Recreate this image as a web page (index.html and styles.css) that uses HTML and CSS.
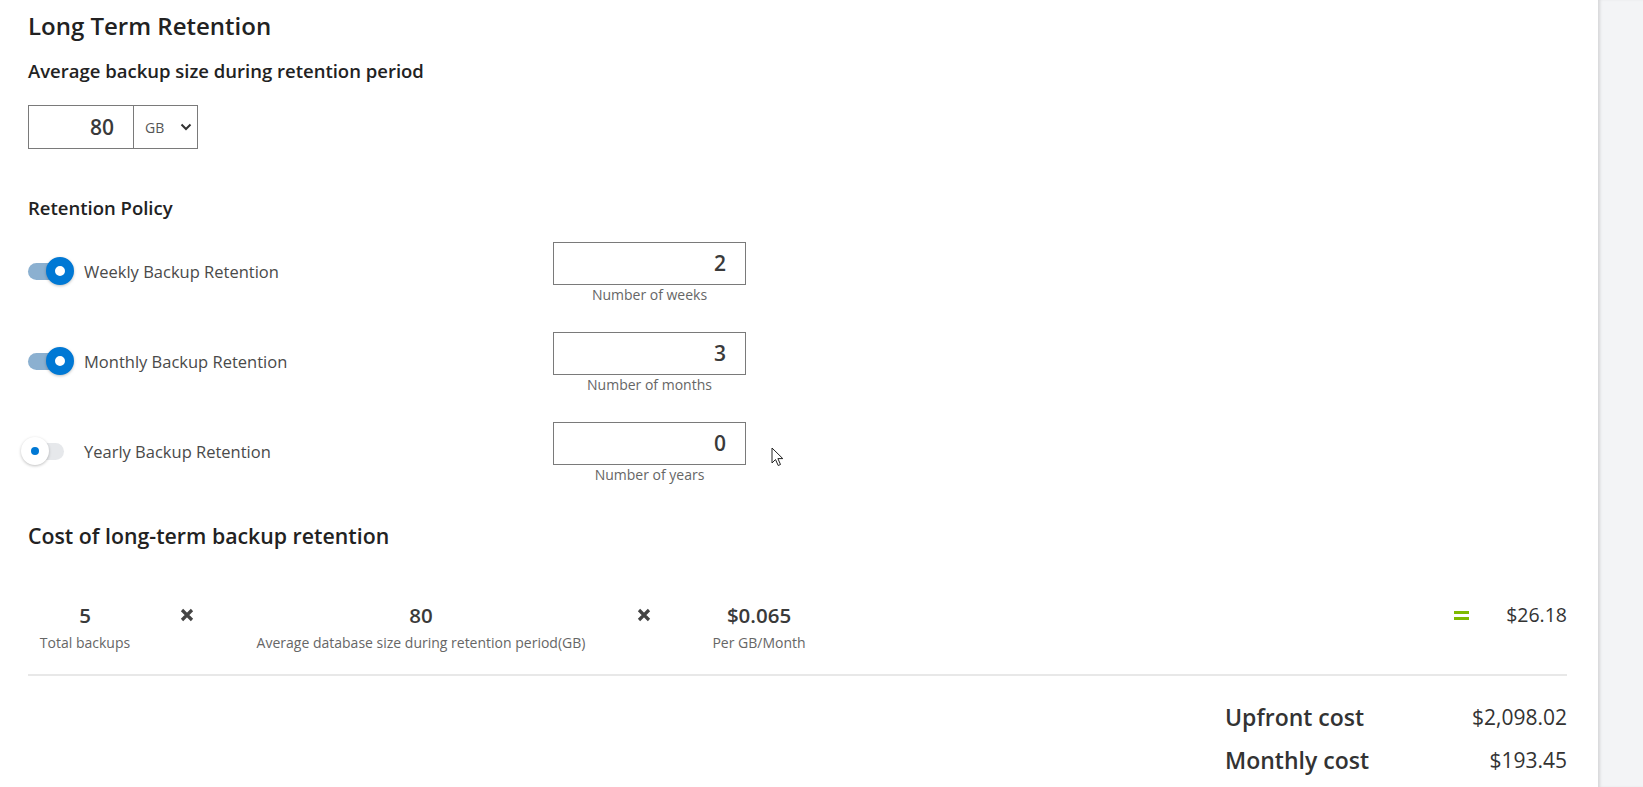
FILE: index.html
```html
<!DOCTYPE html>
<html lang="en">
<head>
<meta charset="utf-8">
<title>Long Term Retention</title>
<link rel="stylesheet" href="styles.css">
</head>
<body>
<div class="page">
  <main class="panel">
    <h2 class="title">Long Term Retention</h2>
    <h3 class="subtitle">Average backup size during retention period</h3>
    <div class="size-group">
      <span class="size-num">80</span>
      <span class="size-unit">GB
        <svg class="chev" width="12" height="8" viewBox="0 0 12 8"><path d="M1.5 1.5 L6 6 L10.5 1.5" fill="none" stroke="#333" stroke-width="2"/></svg>
      </span>
    </div>

    <h4 class="policy">Retention Policy</h4>
    <div class="rows">
      <div class="row">
        <div class="toggle-wrap">
          <span class="toggle on"><span class="knob"></span></span>
          <span class="toggle-label">Weekly Backup Retention</span>
        </div>
        <div class="field">
          <div class="field-box">2</div>
          <div class="field-cap">Number of weeks</div>
        </div>
      </div>
      <div class="row">
        <div class="toggle-wrap">
          <span class="toggle on"><span class="knob"></span></span>
          <span class="toggle-label">Monthly Backup Retention</span>
        </div>
        <div class="field">
          <div class="field-box">3</div>
          <div class="field-cap">Number of months</div>
        </div>
      </div>
      <div class="row">
        <div class="toggle-wrap">
          <span class="toggle off"><span class="knob"></span></span>
          <span class="toggle-label">Yearly Backup Retention</span>
        </div>
        <div class="field">
          <div class="field-box">0</div>
          <div class="field-cap">Number of years</div>
        </div>
      </div>
    </div>

    <h3 class="cost-title">Cost of long-term backup retention</h3>
    <div class="calc">
      <div class="term"><div class="term-val">5</div><div class="term-cap">Total backups</div></div>
      <div class="op"><svg width="14" height="14" viewBox="0 0 14 14"><path d="M2 2 L12 12 M12 2 L2 12" stroke="#444" stroke-width="3.2" stroke-linecap="butt"/></svg></div>
      <div class="term"><div class="term-val">80</div><div class="term-cap">Average database size during retention period(GB)</div></div>
      <div class="op"><svg width="14" height="14" viewBox="0 0 14 14"><path d="M2 2 L12 12 M12 2 L2 12" stroke="#444" stroke-width="3.2" stroke-linecap="butt"/></svg></div>
      <div class="term"><div class="term-val">$0.065</div><div class="term-cap">Per GB/Month</div></div>
      <div class="spacer"></div>
      <div class="eq"><span></span><span></span></div>
      <div class="result">$26.18</div>
    </div>
    <div class="divider"></div>
    <div class="totals">
      <div class="tot-label">Upfront cost</div><div class="tot-val">$2,098.02</div>
      <div class="tot-label">Monthly cost</div><div class="tot-val">$193.45</div>
    </div>
  </main>
  <aside class="side"></aside>
</div>
<svg class="cursor" width="14" height="20" viewBox="0 0 14 20"><path d="M1 1 L1 16 L4.5 12.5 L7.2 18.5 L9.5 17.5 L6.9 11.6 L11.8 11.6 Z" fill="#fff" stroke="#222" stroke-width="1"/></svg>
</body>
</html>
```

FILE: styles.css
```css
html, body {
  margin: 0;
  padding: 0;
  height: 100%;
  overflow: hidden;
  background: #f3f4f6;
  font-family: "Open Sans", "Noto Sans", sans-serif;
  color: #333;
}

.page {
  display: flex;
  height: 787px;
}

.panel {
  width: 1598px;
  box-sizing: border-box;
  background: #fff;
  padding: 0 31px 0 28px;
  display: flex;
  flex-direction: column;
}

.side {
  flex: 1;
  background: #f3f4f6;
  box-shadow: inset 3px 0 3px -1px rgba(0,0,0,0.12);
}

.title {
  margin: 10px 0 0;
  font-size: 24px;
  line-height: 32px;
  font-weight: 600;
  color: #222;
}

.subtitle {
  margin: 16px 0 0;
  font-size: 18.5px;
  line-height: 26px;
  font-weight: 600;
  color: #222;
}

.size-group {
  margin-top: 21px;
  display: flex;
  width: 170px;
  height: 44px;
  box-sizing: border-box;
  border: 1px solid #7a7a7a;
}

.size-num {
  width: 105px;
  box-sizing: border-box;
  border-right: 1px solid #7a7a7a;
  text-align: right;
  padding-right: 19px;
  font-size: 21px;
  font-weight: 600;
  line-height: 42px;
  color: #3a3a3a;
}

.size-unit {
  flex: 1;
  display: flex;
  align-items: center;
  justify-content: space-between;
  padding: 0 5px 0 11px;
  font-size: 14px;
  color: #555;
}

.policy {
  margin: 46px 0 0;
  font-size: 18.5px;
  line-height: 26px;
  font-weight: 600;
  color: #222;
}

.rows {
  margin-top: 21px;
  display: flex;
  flex-direction: column;
  gap: 27px;
}

.row {
  display: flex;
  align-items: center;
  height: 63px;
}

.toggle-wrap {
  width: 525px;
  display: flex;
  align-items: center;
  padding-bottom: 5px;
}

.toggle {
  position: relative;
  width: 36px;
  height: 17px;
  border-radius: 9px;
  flex: none;
}

.toggle.on { background: #8bb0d0; }
.toggle.off { background: #e6e8eb; }

.knob {
  position: absolute;
  top: 50%;
  width: 28px;
  height: 28px;
  margin-top: -14px;
  border-radius: 50%;
  box-sizing: border-box;
  box-shadow: 0 1px 3px rgba(0,0,0,0.25);
}

.toggle.on .knob {
  left: 18px;
  border: 9px solid #0078d4;
  background: #fff;
}

.toggle.off .knob {
  left: -7px;
  background: #fff;
}

.toggle.off .knob::after {
  content: "";
  position: absolute;
  left: 10px;
  top: 10px;
  width: 8px;
  height: 8px;
  border-radius: 50%;
  background: #0078d4;
}

.toggle-label {
  margin-left: 20px;
  font-size: 16.5px;
  color: #4a4a4a;
}

.field {
  width: 193px;
  display: flex;
  flex-direction: column;
  align-items: center;
}

.field-box {
  width: 100%;
  height: 43px;
  box-sizing: border-box;
  border: 1px solid #7a7a7a;
  text-align: right;
  padding-right: 19px;
  font-size: 21px;
  font-weight: 600;
  line-height: 41px;
  color: #3a3a3a;
}

.field-cap {
  font-size: 14px;
  line-height: 20px;
  color: #666;
}

.cost-title {
  margin: 36px 0 0;
  font-size: 21.3px;
  line-height: 30px;
  font-weight: 600;
  color: #222;
}

.calc {
  margin-top: 50px;
  display: grid;
  grid-template-columns: 114px 90px 378px 68px 162px 1fr auto 98px;
  align-items: start;
}

.term {
  display: flex;
  flex-direction: column;
  align-items: center;
  white-space: nowrap;
}

.term-val {
  font-size: 20.5px;
  font-weight: 600;
  line-height: 28px;
  color: #3a3a3a;
}

.term-cap {
  margin-top: 3px;
  font-size: 14px;
  line-height: 22px;
  color: #666;
}

.op {
  display: flex;
  justify-content: center;
  padding-top: 7px;
}

.eq {
  display: flex;
  flex-direction: column;
  gap: 3px;
  padding-top: 10px;
  width: 15px;
}

.eq span {
  display: block;
  height: 3px;
  background: #7fba00;
}

.result {
  text-align: right;
  font-size: 19.5px;
  line-height: 28px;
  color: #333;
}

.divider {
  margin-top: 20px;
  height: 2px;
  background: #e8e8e8;
}

.totals {
  margin-top: 23px;
  align-self: flex-end;
  width: 342px;
  display: grid;
  grid-template-columns: 1fr auto;
  row-gap: 7px;
}

.tot-label {
  font-size: 23px;
  line-height: 36px;
  font-weight: 600;
  color: #333;
}

.tot-val {
  text-align: right;
  font-size: 21px;
  line-height: 36px;
  color: #333;
}

.cursor {
  position: absolute;
  left: 771px;
  top: 447px;
}
```
